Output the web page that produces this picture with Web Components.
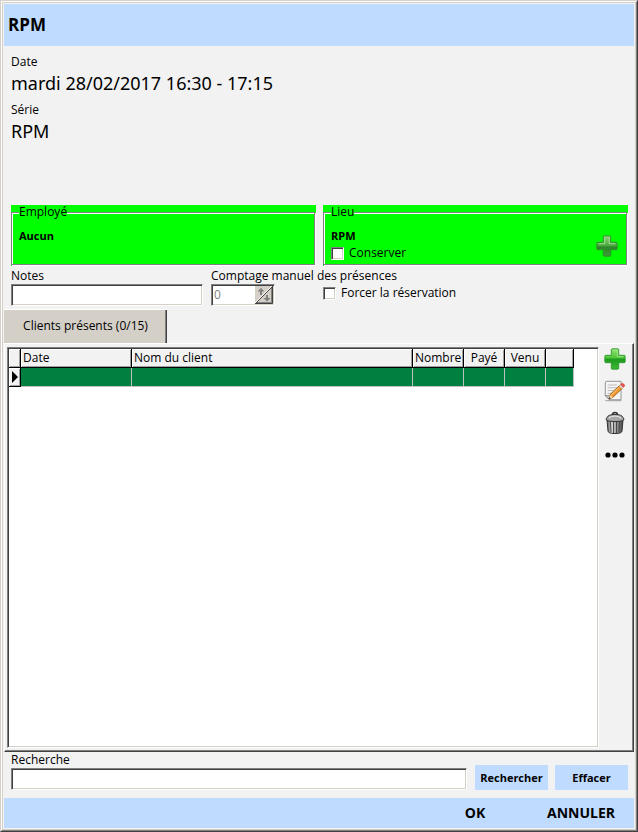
<!DOCTYPE html>
<html lang="fr">
<head>
<meta charset="utf-8">
<meta name="viewport" content="width=device-width, initial-scale=1">
<title>RPM</title>
<style>
    body {
        margin: 0;
        background: #f2f2f2;
        color: #000;
        font: 12px/16px "Open Sans", "Noto Sans", sans-serif;
    }
    .fields {
        padding: 8px 7px 0;
        display: grid;
        gap: 6px;
        min-height: 151px;
        align-content: start;
    }
    .halves {
        display: grid;
        grid-template-columns: 1fr 1fr;
        gap: 7px;
        padding: 0 6px 0 7px;
    }
    .counters {
        display: flex;
        gap: 8px;
    }
    .counters text-field {
        flex: 1;
    }
    .counters number-field {
        width: 105px;
    }
    .halves.notes {
        padding-top: 2px;
        padding-bottom: 3px;
    }
    .force {
        padding-top: 17px;
    }
    .search {
        display: flex;
        align-items: end;
        gap: 7px;
        padding: 0 6px 8px 7px;
    }
    .search text-field {
        flex: 1;
        margin-right: 1px;
    }
    tab-panel {
        flex: 1;
    }
    client-grid {
        flex: 1;
    }
</style>
</head>
<body>
    <dialog-window heading="RPM">
        <div class="fields">
            <read-field label="Date">mardi 28/02/2017 16:30 - 17:15</read-field>
            <read-field label="Série">RPM</read-field>
        </div>
        <div class="halves">
            <group-box legend="Employé" value="Aucun"></group-box>
            <group-box legend="Lieu" value="RPM">
                <check-box label="Conserver"></check-box>
                <icon-button slot="action" icon="plus-soft" label="Choisir un lieu"></icon-button>
            </group-box>
        </div>
        <div class="halves notes">
            <div class="counters">
                <text-field label="Notes"></text-field>
                <number-field label="Comptage manuel des présences" value="0"></number-field>
            </div>
            <check-box class="force" label="Forcer la réservation"></check-box>
        </div>
        <tab-panel label="Clients présents (0/15)">
            <client-grid></client-grid>
            <icon-button slot="tools" icon="plus" label="Ajouter"></icon-button>
            <icon-button slot="tools" icon="edit" label="Modifier"></icon-button>
            <icon-button slot="tools" icon="trash" label="Supprimer"></icon-button>
            <icon-button slot="tools" icon="more" label="Plus"></icon-button>
        </tab-panel>
        <div class="search">
            <text-field label="Recherche"></text-field>
            <flat-button>Rechercher</flat-button>
            <flat-button>Effacer</flat-button>
        </div>
        <flat-button slot="footer" large>OK</flat-button>
        <flat-button slot="footer" large>ANNULER</flat-button>
    </dialog-window>

<script>
// Small helper, every component gets an open shadow root with its own styles.
class BaseElement extends HTMLElement {
    constructor() {
        super();
        this.attachShadow({ mode: 'open' });
    }

    connectedCallback() {
        this.shadowRoot.innerHTML = `
            <style>
                :host { display: block; box-sizing: border-box; }
                * { box-sizing: border-box; }
                input, button { font: inherit; color: inherit; margin: 0; border-radius: 0; }
            </style>
            ${this.render()}
        `;
    }

    attr(name) {
        return this.getAttribute(name) || '';
    }
}

// ### The window: frame, blue title and blue footer ###
class DialogWindow extends BaseElement {
    render() {
        return `
            <style>
                :host {
                    min-height: 100vh;
                    display: flex;
                    border: 1px solid;
                    border-color: #d4d0c8 #404040 #404040 #d4d0c8;
                }
                .edge {
                    flex: 1;
                    min-width: 0;
                    display: flex;
                    border: 1px solid;
                    border-color: #fff #808080 #808080 #fff;
                }
                .inner {
                    flex: 1;
                    min-width: 0;
                    display: flex;
                    flex-direction: column;
                    border: 1px solid #d4d0c8;
                    padding: 1px;
                }
                h1 {
                    margin: 0;
                    padding: 0 4px;
                    background: #bfdbff;
                    font-size: 17px;
                    line-height: 42px;
                }
                main {
                    flex: 1;
                    display: flex;
                    flex-direction: column;
                }
                footer {
                    display: flex;
                    justify-content: flex-end;
                    background: #bfdbff;
                }
            </style>
            <div class="edge"><div class="inner">
                <h1>${this.attr('heading')}</h1>
                <main><slot></slot></main>
                <footer><slot name="footer"></slot></footer>
            </div></div>
        `;
    }
}

class ReadField extends BaseElement {
    render() {
        return `
            <style>
                .value { font-family: "Noto Sans", sans-serif; font-size: 18px; line-height: 26px; }
            </style>
            <div>${this.attr('label')}</div>
            <div class="value"><slot></slot></div>
        `;
    }
}

// ### Green box with an etched border ###
class GroupBox extends BaseElement {
    render() {
        return `
            <style>
                :host { background: #0f0; height: 61px; padding: 0 1px 1px 0; }
                fieldset {
                    height: 100%;
                    min-width: 0;
                    margin: 0;
                    padding: 0 7px;
                    border: 1px solid #808080;
                    box-shadow: inset 1px 1px #fff, 1px 1px #fff;
                    display: flex;
                    justify-content: space-between;
                }
                legend {
                    padding: 0;
                    line-height: 14px;
                    background: #0f0;
                }
                .content { padding-top: 8px; }
                .value { font-size: 11px; font-weight: bold; line-height: 18px; }
                .action { align-self: end; padding-bottom: 6px; }
            </style>
            <fieldset>
                <legend>${this.attr('legend')}</legend>
                <div class="content">
                    <div class="value">${this.attr('value')}</div>
                    <slot></slot>
                </div>
                <div class="action"><slot name="action"></slot></div>
            </fieldset>
        `;
    }
}

class CheckBox extends BaseElement {
    render() {
        return `
            <style>
                label { display: flex; align-items: center; gap: 5px; white-space: nowrap; line-height: 16px; }
                input {
                    appearance: none;
                    width: 13px;
                    height: 13px;
                    background: #fff;
                    border: 1px solid;
                    border-color: #808080 #fff #fff #808080;
                    box-shadow: inset 1px 1px #404040, inset -1px -1px #d4d0c8;
                }
                input:checked::after { content: "✓"; display: block; line-height: 11px; text-align: center; }
            </style>
            <label><input type="checkbox">${this.attr('label')}</label>
        `;
    }
}

const sunken = `
    background: #fff;
    border: 1px solid;
    border-color: #808080 #fff #fff #808080;
    box-shadow: inset 1px 1px #404040, inset -1px -1px #d4d0c8;
`;

class TextField extends BaseElement {
    render() {
        return `
            <style>
                label { display: block; }
                input { display: block; width: 100%; height: 22px; padding: 0 4px; outline: 0; ${sunken} }
            </style>
            <label for="box">${this.attr('label')}</label>
            <input id="box" type="text">
        `;
    }
}

class NumberField extends BaseElement {
    render() {
        return `
            <style>
                label { display: block; white-space: nowrap; }
                .box { display: flex; width: 64px; height: 22px; padding: 1px; ${sunken} }
                input { flex: 1; min-width: 0; padding: 0 1px; border: 0; background: none; color: #808080; }
                button { width: 18px; padding: 0; border: 0; background: none; }
                svg { display: block; width: 18px; height: 18px; }
            </style>
            <label for="box">${this.attr('label')}</label>
            <div class="box">
                <input id="box" type="text" inputmode="numeric" value="${this.attr('value')}" disabled>
                <button disabled aria-label="Augmenter ou diminuer">
                    <svg viewBox="0 0 18 18">
                        <path d="M0 0h18v18H0z" fill="#d4d0c8"/>
                        <path d="M1 16.500h15.500V1" fill="none" stroke="#808080"/>
                        <path d="M0 17.500h17.500V0" fill="none" stroke="#404040"/>
                        <path d="M0 17L17 0" stroke="#fff"/>
                        <path d="M1 17L17 1" stroke="#404040"/>
                        <path d="M6 2l3.500 3.500H7V9H5V5.500H2.500zM11 9h2v3h2.500L12 15.500 8.500 12H11z" fill="#808080"/>
                    </svg>
                </button>
            </div>
        `;
    }
}

class FlatButton extends BaseElement {
    render() {
        return `
            <style>
                button {
                    display: block;
                    width: 73px;
                    height: 25px;
                    padding: 0;
                    border: 0;
                    background: #bfdbff;
                    font-size: 11px;
                    font-weight: bold;
                    white-space: nowrap;
                }
                :host([large]) button { width: 106px; height: 30px; font-size: 14px; }
                button:hover { background: #a9cdfb; }
            </style>
            <button type="button"><slot></slot></button>
        `;
    }
}

const plusPath = 'M8 2q0-1 1-1h6q1 0 1 1v6h6q1 0 1 1v6q0 1-1 1h-6v6q0 1-1 1H9q-1 0-1-1v-6H2q-1 0-1-1V9q0-1 1-1h6z';

const icons = {
    'plus': `
        <defs><linearGradient id="g" x2="0" y2="1"><stop offset="0" stop-color="#8fe070"/><stop offset=".45" stop-color="#4fc43a"/><stop offset=".5" stop-color="#1d9a1d"/><stop offset="1" stop-color="#3db836"/></linearGradient></defs>
        <path d="${plusPath}" fill="url(#g)" stroke="#2b9a2b"/>
        <path d="M9.500 2.500h5v7H21" fill="none" stroke="#b5efa0" opacity=".7"/>`,
    'plus-soft': `
        <defs><linearGradient id="g" x2="0" y2="1"><stop offset="0" stop-color="#8fd47a"/><stop offset=".5" stop-color="#4aa53c"/><stop offset=".55" stop-color="#2b8427"/><stop offset="1" stop-color="#3f9f36"/></linearGradient></defs>
        <path d="${plusPath}" fill="url(#g)" stroke="#2f8a2b"/>
        <path d="M9.500 2.500v7H3M14.500 2.500v7H21" fill="none" stroke="#b9e8a8" opacity=".8"/>`,
    'edit': `
        <path d="M4 1.500h15.500v20H7L2.500 17V3q0-1.500 1.500-1.500z" fill="#f5f5f5" stroke="#8d8d8d"/>
        <path d="M5 5.500h10M5 8.500h10M5 11.500h8M5 14.500h5" stroke="#b4b4b4"/>
        <path d="M2.500 17H7v4.500z" fill="#ccc" stroke="#8d8d8d"/>
        <path d="M2.500 22.500h17.500" stroke="#999"/>
        <path d="M18.500 5.500l3 3L10.500 19l-4 1.500 1-4.500z" fill="#f39a2e" stroke="#9b5d1c"/>
        <path d="M17 8.500L8.500 17" stroke="#ffd08a"/>
        <path d="M7.500 16l3 3-4 1.500z" fill="#f4d9b0"/>
        <path d="M6.900 18.700l1.500 1.200-2.100.8z" fill="#222"/>
        <path d="M17.500 6.500l3 3 1.500-1.500-3-3z" fill="#cfd3d6"/>
        <path d="M19 5l1.500-1.500q1 0 2 1t1 2L22 8z" fill="#ee5252" stroke="#c93a3a" stroke-width=".6"/>`,
    'trash': `
        <defs><linearGradient id="t"><stop offset="0" stop-color="#555"/><stop offset=".3" stop-color="#ddd"/><stop offset=".6" stop-color="#999"/><stop offset="1" stop-color="#444"/></linearGradient></defs>
        <path d="M4 9h16l-1 11q0 2.500-7 2.500T5 20z" fill="url(#t)" stroke="#333"/>
        <path d="M7.500 11l.5 10M10.500 11v11M13.500 11v11M16.500 11l-.5 10" stroke="#484848"/>
        <path d="M9.500 4q0-2.500 2.500-2.500T14.500 4" fill="none" stroke="#333" stroke-width="1.600"/>
        <path d="M4 6.500Q5 3.500 12 3.500t8 3L21 8q0 2.500-9 2.500T3 8z" fill="#a9a9a9" stroke="#333"/>
        <path d="M6 7q2-2 6-2t6 2" fill="none" stroke="#eee"/>`,
    'more': `<circle cx="5" cy="12" r="2.600"/><circle cx="12" cy="12" r="2.600"/><circle cx="19" cy="12" r="2.600"/>`
};

// Some of the drawings need a bit of air around them.
const iconBoxes = {
    'plus': '-1 -1 26 26',
    'plus-soft': '-1 -1 26 26',
    'edit': '0 -1 26 26'
};

class IconButton extends BaseElement {
    render() {
        const icon = this.attr('icon');
        return `
            <style>
                button { display: block; padding: 0; border: 0; background: none; }
                svg { display: block; width: 24px; height: 24px; }
            </style>
            <button type="button" aria-label="${this.attr('label')}">
                <svg viewBox="${iconBoxes[icon] || '0 0 24 24'}">${icons[icon]}</svg>
            </button>
        `;
    }
}

// ### Tab page, content to the left and a tool column to the right ###
class TabPanel extends BaseElement {
    render() {
        return `
            <style>
                :host { display: flex; flex-direction: column; }
                .tab {
                    align-self: flex-start;
                    width: 163px;
                    height: 34px;
                    padding: 0;
                    border: 0;
                    background: #d4d0c8;
                    box-shadow: inset 0 1px #fff, inset -1px 0 #404040, inset -2px 0 #808080;
                }
                .page {
                    flex: 1;
                    display: flex;
                    padding: 3px 2px 3px;
                    border: 1px solid;
                    border-color: #fff #404040 #404040 #fff;
                    box-shadow: inset -1px -1px #808080;
                }
                .tools {
                    width: 32px;
                    display: flex;
                    flex-direction: column;
                    align-items: center;
                    gap: 8px;
                }
            </style>
            <button class="tab" type="button" role="tab" aria-selected="true">${this.attr('label')}</button>
            <div class="page">
                <slot></slot>
                <div class="tools"><slot name="tools"></slot></div>
            </div>
        `;
    }
}

class ClientGrid extends BaseElement {
    render() {
        return `
            <style>
                :host { padding: 1px; min-width: 0; ${sunken} }
                table { width: calc(100% - 23px); table-layout: fixed; border-collapse: separate; border-spacing: 0; }
                th, td { padding: 0 2px; height: 19px; overflow: hidden; white-space: nowrap; }
                th {
                    text-align: center;
                    font-weight: normal;
                    background: #f2f2f2;
                    border-right: 1px solid #000;
                    border-bottom: 1px solid #000;
                    box-shadow: inset 1px 1px #fff, inset -1px -1px #a0a0a0;
                }
                th.left { text-align: left; }
                td { background: #008040; border-right: 1px solid #c0c0c0; border-bottom: 1px solid #c0c0c0; }
                td.mark {
                    padding: 0;
                    background: #f2f2f2;
                    border-color: #000;
                    box-shadow: inset 1px 1px #fff, inset -1px -1px #a0a0a0;
                }
                svg { display: block; width: 12px; height: 14px; }
            </style>
            <table>
                <colgroup>
                    <col style="width: 12px"><col style="width: 111px"><col>
                    <col style="width: 51px"><col style="width: 41px"><col style="width: 41px"><col style="width: 28px">
                </colgroup>
                <thead>
                    <tr><th></th><th class="left">Date</th><th class="left">Nom du client</th><th>Nombre</th><th>Payé</th><th>Venu</th><th></th></tr>
                </thead>
                <tbody>
                    <tr><td class="mark"><svg viewBox="0 0 12 14"><path d="M3 1v12l6-6z"/></svg></td><td></td><td></td><td></td><td></td><td></td><td></td></tr>
                </tbody>
            </table>
        `;
    }
}

customElements.define('dialog-window', DialogWindow);
customElements.define('read-field', ReadField);
customElements.define('group-box', GroupBox);
customElements.define('check-box', CheckBox);
customElements.define('text-field', TextField);
customElements.define('number-field', NumberField);
customElements.define('flat-button', FlatButton);
customElements.define('icon-button', IconButton);
customElements.define('tab-panel', TabPanel);
customElements.define('client-grid', ClientGrid);
</script>
</body>
</html>
